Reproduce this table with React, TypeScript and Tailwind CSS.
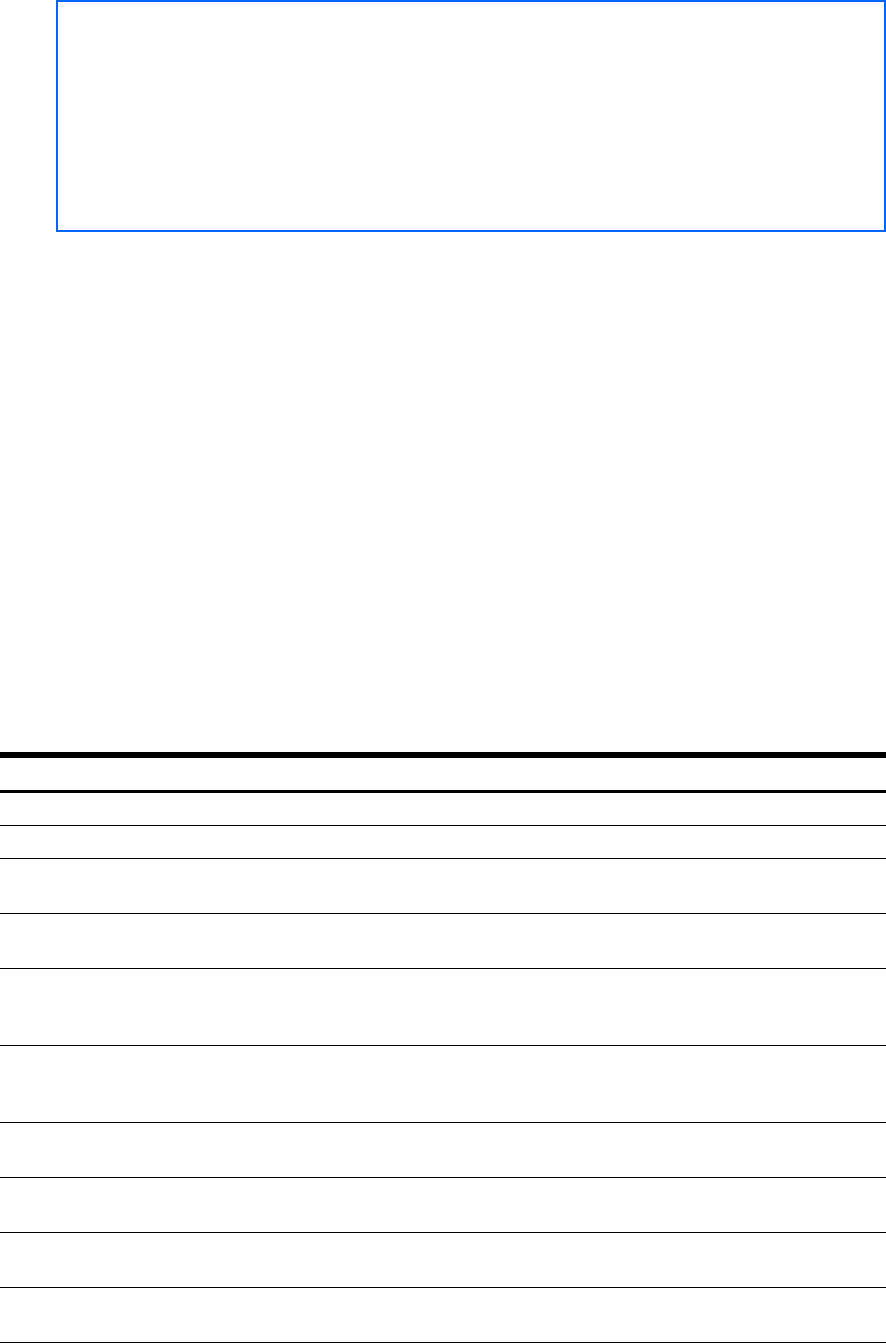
import React from 'react';

const rows = [
  'h-[33px]',
  'h-[33px]',
  'h-[55px]',
  'h-[55px]',
  'h-[77px]',
  'h-[77px]',
  'h-[55px]',
  'h-[55px]',
  'h-[55px]',
  'h-[55px]',
];

const App = () => {
  return (
    <div className="w-full bg-white font-['Liberation_Sans',Arial,sans-serif]">
      <div className="ml-[56px] h-[232px] border-2 border-[#0066ff]"></div>
      <div className="mt-[520px] border-t-[6px] border-black">
        <div className="h-[35px] border-b-[3px] border-black"></div>
        {rows.map((h, i) => (
          <div key={i} className={`${h} border-b border-black`}></div>
        ))}
      </div>
    </div>
  );
};

export default App;
